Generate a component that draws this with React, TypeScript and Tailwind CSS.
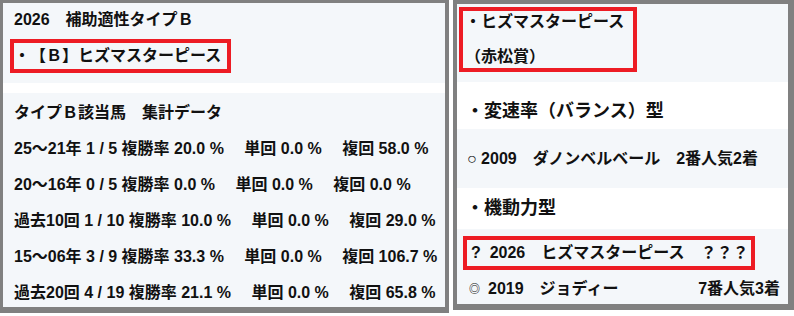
import React from "react";

const rows = [
  ["25～21年 1 / 5 複勝率 20.0 %", "単回 0.0 %", "複回 58.0 %"],
  ["20～16年 0 / 5 複勝率 0.0 %", "単回 0.0 %", "複回 0.0 %"],
  ["過去10回 1 / 10 複勝率 10.0 %", "単回 0.0 %", "複回 29.0 %"],
  ["15～06年 3 / 9 複勝率 33.3 %", "単回 0.0 %", "複回 106.7 %"],
  ["過去20回 4 / 19 複勝率 21.1 %", "単回 0.0 %", "複回 65.8 %"],
];

export default function App() {
  return (
    <div className="w-[794px] h-[316px] bg-white flex items-start text-[16px] font-bold text-[#111] font-['Liberation_Sans','Noto_Sans_CJK_JP',sans-serif] [text-spacing-trim:space-all] overflow-hidden">
      {/* Left panel */}
      <div className="w-[449px] h-[313px] box-border border-[#808080] border-t-[3px] border-l-[3px] border-r-[4px] border-b-[6px] bg-white flex flex-col gap-[10px]">
        <div className="h-[80px] bg-[#f4f7fa] pt-[5px] pl-[11px] flex flex-col">
          <div className="h-[24px] leading-[24px] whitespace-pre">2026　補助適性タイプＢ</div>
          <div className="mt-[7px] -ml-[4px] self-start border-[4px] border-[#ed1c24] leading-[26px] pr-[6px] whitespace-pre">
            ・【Ｂ】ヒズマスターピース
          </div>
        </div>
        <div className="flex-1 bg-[#f4f7fa] pl-[11px] pt-[2px] overflow-hidden">
          <div className="h-[36px] leading-[36px] whitespace-pre">タイプＢ該当馬　集計データ</div>
          {rows.map((r, i) => (
            <div key={i} className="h-[36px] leading-[36px] whitespace-pre">
              {r[0]}　 {r[1]}　 {r[2]}
            </div>
          ))}
        </div>
      </div>

      {/* Right panel */}
      <div className="ml-[4px] w-[341px] h-[310px] box-border border-[#808080] border-t-[4px] border-l-[4px] border-r-[6px] border-b-[6px] bg-white flex flex-col">
        <div className="h-[78px] bg-[#f4f7fa] pt-[3px] pl-[2px]">
          <div className="inline-flex flex-col border-[4px] border-[#ed1c24] pr-[9px] pl-[2px] h-[65px] box-border justify-between whitespace-pre">
            <div className="leading-[22px]">・ヒズマスターピース</div>
            <div className="leading-[22px]">（赤松賞）</div>
          </div>
        </div>
        <div className="h-[47px] pl-[9px] pt-[17px] text-[18px] leading-[24px] whitespace-pre">・変速率（バランス）型</div>
        <div className="h-[59px] bg-[#f4f7fa] pl-[10px] flex items-center whitespace-pre">○ 2009　ダノンベルベール　2番人気2着</div>
        <div className="h-[41px] pl-[9px] text-[18px] flex items-center whitespace-pre">・機動力型</div>
        <div className="flex-1 bg-[#f4f7fa] pt-[7px] flex flex-col">
          <div className="ml-[6px] self-start border-[4px] border-[#ed1c24] leading-[26px] pl-[4px] pr-[3px] whitespace-pre">
            {"?  2026　ヒズマスターピース　？？？"}
          </div>
          <div className="mt-[7px] pl-[9px] pr-[8px] flex justify-between items-center leading-[24px] whitespace-pre">
            <span className="flex items-center">
              <span className="inline-block w-[22px] pl-[3px] text-[11px] leading-[24px]">◎</span>
              <span>{"2019　ジョディー"}</span>
            </span>
            <span>7番人気3着</span>
          </div>
        </div>
      </div>
    </div>
  );
}
